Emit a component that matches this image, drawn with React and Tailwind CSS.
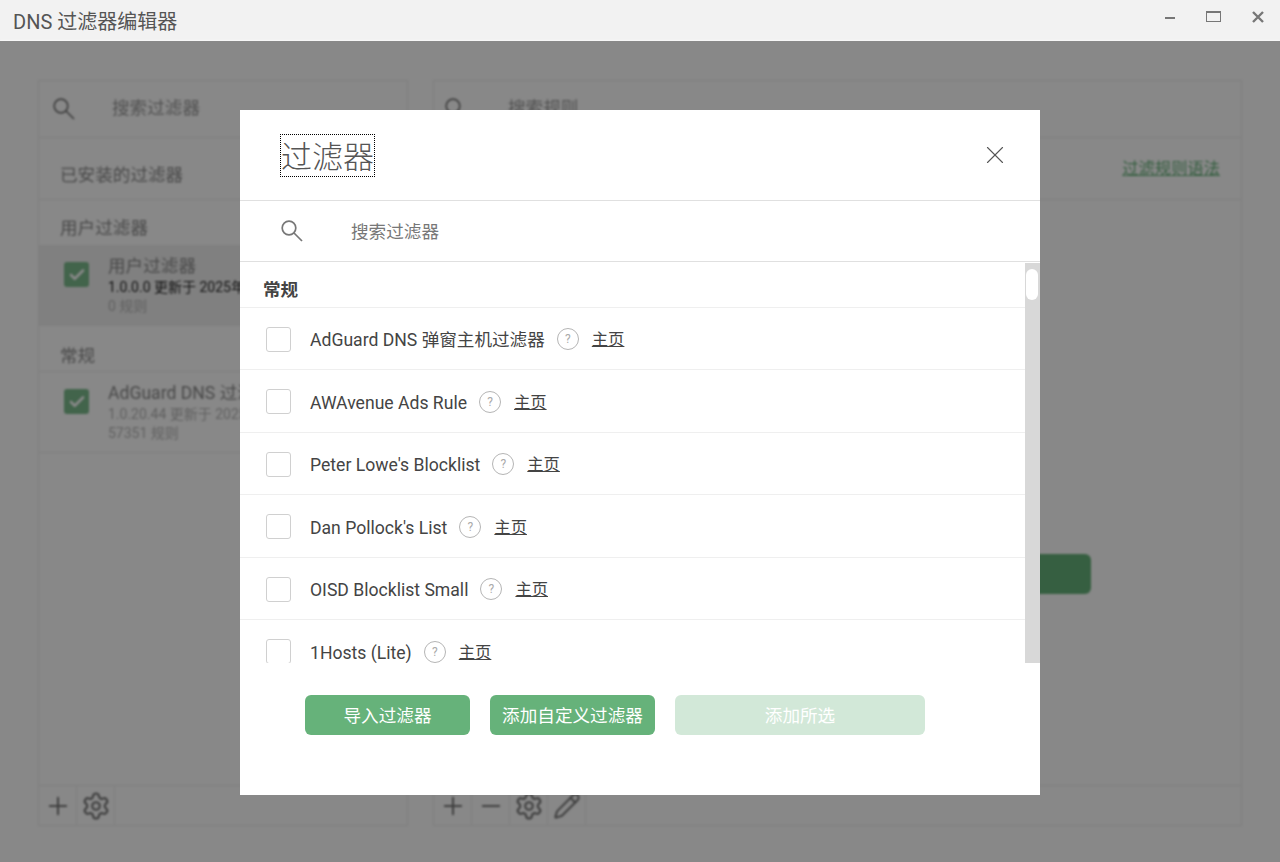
import { Check, Minus, Pencil, Plus, Settings, X } from "lucide-react";

const font = `Roboto, "Noto Sans CJK SC", sans-serif`;

const filters = [
  "AdGuard DNS 弹窗主机过滤器",
  "AWAvenue Ads Rule",
  "Peter Lowe's Blocklist",
  "Dan Pollock's List",
  "OISD Blocklist Small",
  "1Hosts (Lite)",
];

const SearchIcon = () => (
  <svg width="22" height="22" viewBox="0 0 22 22" fill="none" stroke="#777" strokeWidth="1.7" className="shrink-0">
    <circle cx="8" cy="8" r="6.8" />
    <path d="M13 13l8 8" />
  </svg>
);

const ToolButton = ({ children }) => (
  <div className="w-[38px] h-full flex items-center justify-center border-r border-[#ececec] text-[#777]">
    {children}
  </div>
);

const InstalledFilter = ({ name, version, rules, active }) => (
  <div className={`flex gap-[19px] pl-[25px] h-[81px] pt-[8px] ${active ? "bg-[#f0f0f0]" : "border-b border-[#ececec]"}`}>
    <div className="mt-[9px] w-[25px] h-[25px] shrink-0 rounded-[3px] bg-[#7cbb8d] flex items-center justify-center">
      <Check size={18} strokeWidth={3.5} className="text-white" />
    </div>
    <div className="whitespace-nowrap pt-[3px]">
      <div className="text-[17.6px] leading-[21px] text-[#8a8a8a]">{name}</div>
      <div className={`text-[14px] leading-[20px] ${active ? "text-[#222]" : "text-[#b5b5b5]"}`}>{version}</div>
      <div className="text-[14px] leading-[19px] text-[#b5b5b5]">{rules}</div>
    </div>
  </div>
);

const Background = () => (
  <div className="absolute inset-0 blur-[0.8px] flex gap-[25px] px-[38px] pt-[39px] pb-[36px] bg-white">
    <div className="w-[370px] border border-[#ececec] flex flex-col overflow-hidden">
      <div className="h-[57px] shrink-0 flex items-center border-b border-[#ececec] pl-[14px] pb-[1px]">
        <SearchIcon />
        <span className="ml-[37px] text-[17.6px] text-[#999]">搜索过滤器</span>
      </div>
      <div className="h-[62px] shrink-0 flex items-center border-b border-[#ececec] pl-[21px] pt-[14px] text-[17.6px] text-[#8a8a8a]">
        已安装的过滤器
      </div>
      <div className="h-[45px] shrink-0 flex items-end pb-[4px] pl-[21px] text-[17.6px] text-[#8a8a8a]">用户过滤器</div>
      <InstalledFilter name="用户过滤器" version="1.0.0.0 更新于 2025年" rules="0 规则" active />
      <div className="h-[46px] shrink-0 flex items-end pb-[2px] pl-[21px] text-[17.6px] text-[#8a8a8a] border-b border-[#ececec]">常规</div>
      <InstalledFilter name="AdGuard DNS 过滤器" version="1.0.20.44 更新于 2025年" rules="57351 规则" />
      <div className="mt-auto h-[40px] shrink-0 flex border-t border-[#ececec]">
        <ToolButton><Plus size={28} strokeWidth={1.75} /></ToolButton>
        <ToolButton><Settings size={30} strokeWidth={1.75} /></ToolButton>
      </div>
    </div>
    <div className="flex-1 border border-[#ececec] flex flex-col overflow-hidden">
      <div className="h-[57px] shrink-0 flex items-center border-b border-[#ececec] pl-[11px] pb-[1px]">
        <SearchIcon />
        <span className="ml-[41px] text-[17.6px] text-[#999]">搜索规则</span>
      </div>
      <div className="h-[62px] shrink-0 flex items-center justify-end border-b border-[#ececec] pr-[21px] pt-[2px]">
        <span className="text-[16.3px] text-[#66b27a] underline">过滤规则语法</span>
      </div>
      <div className="flex-1 flex flex-col items-center pt-[354px]">
        <div className="w-[506px] h-[40px] rounded-[6px] bg-[#66b27a]" />
      </div>
      <div className="h-[40px] shrink-0 flex border-t border-[#ececec]">
        <ToolButton><Plus size={28} strokeWidth={1.75} /></ToolButton>
        <ToolButton><Minus size={28} strokeWidth={1.75} /></ToolButton>
        <ToolButton><Settings size={30} strokeWidth={1.75} /></ToolButton>
        <ToolButton><Pencil size={28} strokeWidth={1.75} /></ToolButton>
      </div>
    </div>
  </div>
);

const FilterRow = ({ name }) => (
  <div className="h-[62.5px] shrink-0 flex items-center pl-[26px] pt-[2px] border-b border-[#efefef]">
    <div className="w-[25px] h-[25px] shrink-0 rounded-[3px] border border-[#d0d0d0] bg-white" />
    <span className="ml-[19px] pt-[2px] text-[17.6px] text-[#444] whitespace-nowrap">{name}</span>
    <span className="ml-[12px] w-[22px] h-[22px] shrink-0 rounded-full border border-[#b5b5b5] flex items-center justify-center text-[12px] text-[#aaa]">?</span>
    <span className="ml-[13px] pt-[2px] text-[16.3px] text-[#444] underline">主页</span>
  </div>
);

const FilterDialog = () => (
  <div className="absolute left-[240px] top-[69px] w-[800px] h-[685px] bg-white flex flex-col">
    <div className="h-[91px] shrink-0 flex items-center justify-between pl-[41px] pr-[30px] border-b border-[#e0e0e0]">
      <span className="h-[41px] text-[31px] leading-[45px] font-light text-[#555] outline-1 outline-dotted outline-black">过滤器</span>
      <X size={30} strokeWidth={0.9} className="text-[#555]" />
    </div>
    <div className="h-[61px] shrink-0 flex items-center pl-[41px] border-b border-[#e0e0e0]">
      <SearchIcon />
      <span className="ml-[48px] pt-[2px] text-[17.6px] text-[#777]">搜索过滤器</span>
    </div>
    <div className="h-[401px] shrink-0 flex overflow-hidden">
      <div className="flex-1 flex flex-col overflow-hidden">
        <div className="h-[45.5px] shrink-0 flex items-end pl-[23px] pb-[3px] border-b border-[#efefef] text-[17.6px] font-bold text-[#444]">常规</div>
        {filters.map((name) => (
          <FilterRow key={name} name={name} />
        ))}
      </div>
      <div className="w-[15px] shrink-0 bg-[#d8d8d8] mt-[1px] pl-[1px] pt-[6px]">
        <div className="w-[12px] h-[31px] rounded-full bg-white" />
      </div>
    </div>
    <div className="flex gap-[20px] pl-[65px] pt-[32px]">
      <button className="w-[165px] h-[40px] pt-[2px] rounded-[6px] bg-[#66b27a] text-white text-[17.6px]">导入过滤器</button>
      <button className="w-[165px] h-[40px] pt-[2px] rounded-[6px] bg-[#66b27a] text-white text-[17.6px]">添加自定义过滤器</button>
      <button className="w-[250px] h-[40px] pt-[2px] rounded-[6px] bg-[#d2e8d8] text-white text-[17.6px]">添加所选</button>
    </div>
  </div>
);

export default function App() {
  return (
    <div className="w-[1280px] h-[862px] flex flex-col overflow-hidden bg-white" style={{ fontFamily: font }}>
      <div className="h-[41px] shrink-0 bg-[#f2f2f2] flex items-center justify-between pl-[13px] pr-[16px]">
        <span className="pt-[2px] text-[20px] text-[#555]">DNS 过滤器编辑器</span>
        <div className="flex items-center gap-[31px] mb-[8px] text-[#777]">
          <div className="w-[10px] h-[2px] mt-[3px] bg-[#777]" />
          <div className="w-[15px] h-[11px] border border-[#777] border-t-2" />
          <svg width="12" height="12" viewBox="0 0 12 12" stroke="currentColor" strokeWidth="2.4">
            <path d="M1 1l10 10M11 1L1 11" />
          </svg>
        </div>
      </div>
      <div className="relative flex-1">
        <Background />
        <div className="absolute inset-0 bg-black/[0.467]" />
        <FilterDialog />
      </div>
    </div>
  );
}
